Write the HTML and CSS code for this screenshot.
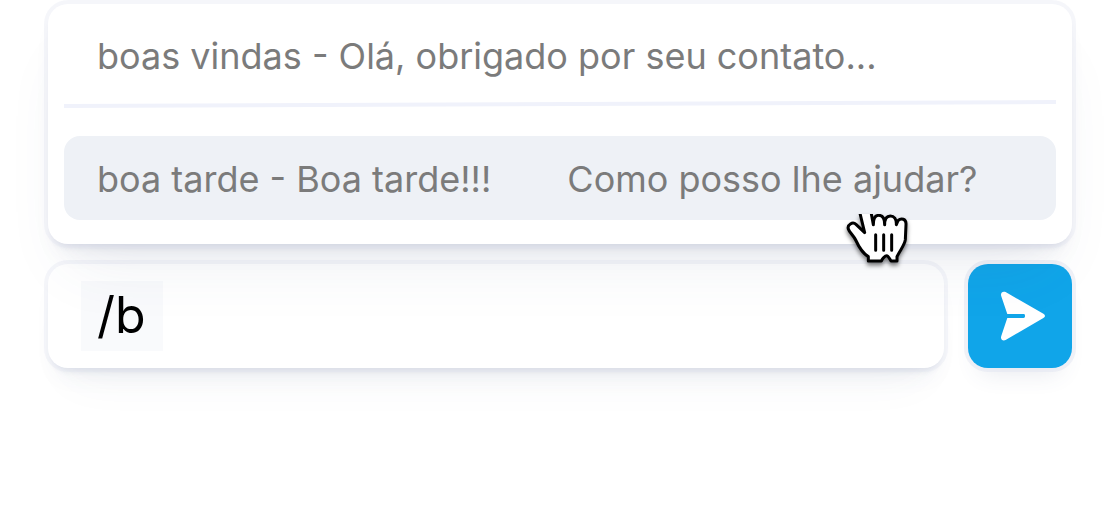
FILE: index.html
```html
<!DOCTYPE html>
<html lang="pt-BR">
<head>
  <meta charset="utf-8">
  <meta name="viewport" content="width=device-width, initial-scale=1">
  <title>Respostas rápidas</title>
  <link rel="stylesheet" href="styles.css">
</head>
<body>
  <main class="chat">
    <section class="suggestions" aria-label="Respostas rápidas">
      <button class="option" type="button">boas vindas - Olá, obrigado por seu contato...</button>
      <svg class="divider" viewBox="0 0 992 8" preserveAspectRatio="none" aria-hidden="true">
        <path d="M0 4L992 0V4L0 8Z" fill="#f0f2fb"/>
      </svg>
      <button class="option option-active" type="button">
        <span>boa tarde - Boa tarde!!!</span>
        <span>Como posso lhe ajudar?</span>
      </button>
      <svg class="pointer" viewBox="75 72 195 165" aria-hidden="true">
        <path class="pointer-hand" d="M119 66L134 128L108 103C98 94 81 104 85 117C88 127 101 137 107 150C118 174 128 190 145 200V213H184C187 207 195 197 200 197C205 197 209 207 213 213H231V200C240 180 254 166 256 149L258 103C259 86 243 83 234 92L229 104C230 86 222 78 211 78C199 78 194 86 194 104C194 84 187 76 176 76C164 76 160 86 160 104L153 66"/>
        <path class="pointer-lines" d="M167 134V181M191 134V181M215 134V181"/>
      </svg>
    </section>
    <form class="composer">
      <div class="field">
        <input class="message" type="text" value="/b" aria-label="Mensagem">
      </div>
      <button class="send" type="button" aria-label="Enviar">
        <svg class="send-icon" viewBox="0 0 104 104" aria-hidden="true">
          <path d="M37.600 28.100L75.400 49.700Q78.600 51.900 75.400 54.100L37.600 76.000C34.700 77.300 32.300 75.200 33.200 72.200L39.300 53.900H55.600Q57 53.900 57 52.500V51.500Q57 50.100 55.600 50.100H39.300L33.200 31.900C32.300 28.900 34.700 26.800 37.600 28.100Z" fill="#fff"/>
        </svg>
      </button>
    </form>
  </main>
</body>
</html>
```
FILE: styles.css
```css
* {
  box-sizing: border-box;
}

body {
  min-height: 100vh;
  margin: 0;
  background: #fff;
  font-family: Inter, "Liberation Sans", sans-serif;
}

button,
input {
  margin: 0;
  border: 0;
  font: inherit;
}

.chat {
  display: flex;
  flex-direction: column;
  gap: 20px;
  min-height: 100vh;
  padding: 4px 48px;
}

.suggestions {
  position: relative;
  z-index: 1;
  padding: 0 16px 24px;
  border-radius: 20px;
  background: #fff;
  box-shadow: 0 0 0 4px rgba(226, 230, 242, 0.36), 0 6px 6px -4px rgba(71, 85, 125, 0.18), 0 16px 24px -12px rgba(71, 85, 125, 0.12), 0 40px 60px -24px rgba(71, 85, 125, 0.1);
}

.option {
  display: flex;
  align-items: center;
  gap: 76px;
  width: 100%;
  height: 84px;
  padding: 2px 33px 0;
  border-radius: 16px;
  background: transparent;
  color: #7b7b7b;
  font-size: 36px;
  line-height: 44px;
  text-align: left;
  white-space: nowrap;
}

.suggestions > .option:first-child {
  height: 96px;
  padding-top: 8px;
}

.option-active {
  background: #eef1f6;
}

.divider {
  display: block;
  width: 100%;
  height: 8px;
  margin-bottom: 28px;
}

.pointer {
  position: absolute;
  top: 210px;
  right: 162px;
  width: 65px;
  height: 55px;
  filter: drop-shadow(0 3px 2px rgba(0, 0, 0, 0.5));
}

.pointer-hand {
  fill: #fff;
  stroke: #000;
  stroke-width: 9;
  stroke-linejoin: round;
}

.pointer-lines {
  fill: none;
  stroke: #000;
  stroke-width: 9;
  stroke-linecap: round;
}

.composer {
  display: flex;
  gap: 24px;
}

.field {
  display: flex;
  flex: 1;
  align-items: center;
  height: 104px;
  padding: 0 33px;
  border-radius: 20px;
  background: #fff;
  box-shadow: 0 0 0 4px rgba(226, 230, 242, 0.36), 0 6px 6px -4px rgba(71, 85, 125, 0.16), 0 16px 24px -12px rgba(71, 85, 125, 0.1), 0 32px 48px -24px rgba(71, 85, 125, 0.06);
}

.message {
  width: 82px;
  height: 70px;
  padding: 0 16px 2px;
  background: #f9fafc;
  color: #000;
  font-size: 50px;
  line-height: 60px;
}

.send {
  width: 104px;
  height: 104px;
  padding: 0;
  border-radius: 20px;
  background: #10a5e9;
  box-shadow: 0 0 0 4px rgba(226, 230, 242, 0.5), 0 16px 24px -12px rgba(71, 85, 125, 0.14);
}

.send-icon {
  display: block;
  width: 100%;
}
```
